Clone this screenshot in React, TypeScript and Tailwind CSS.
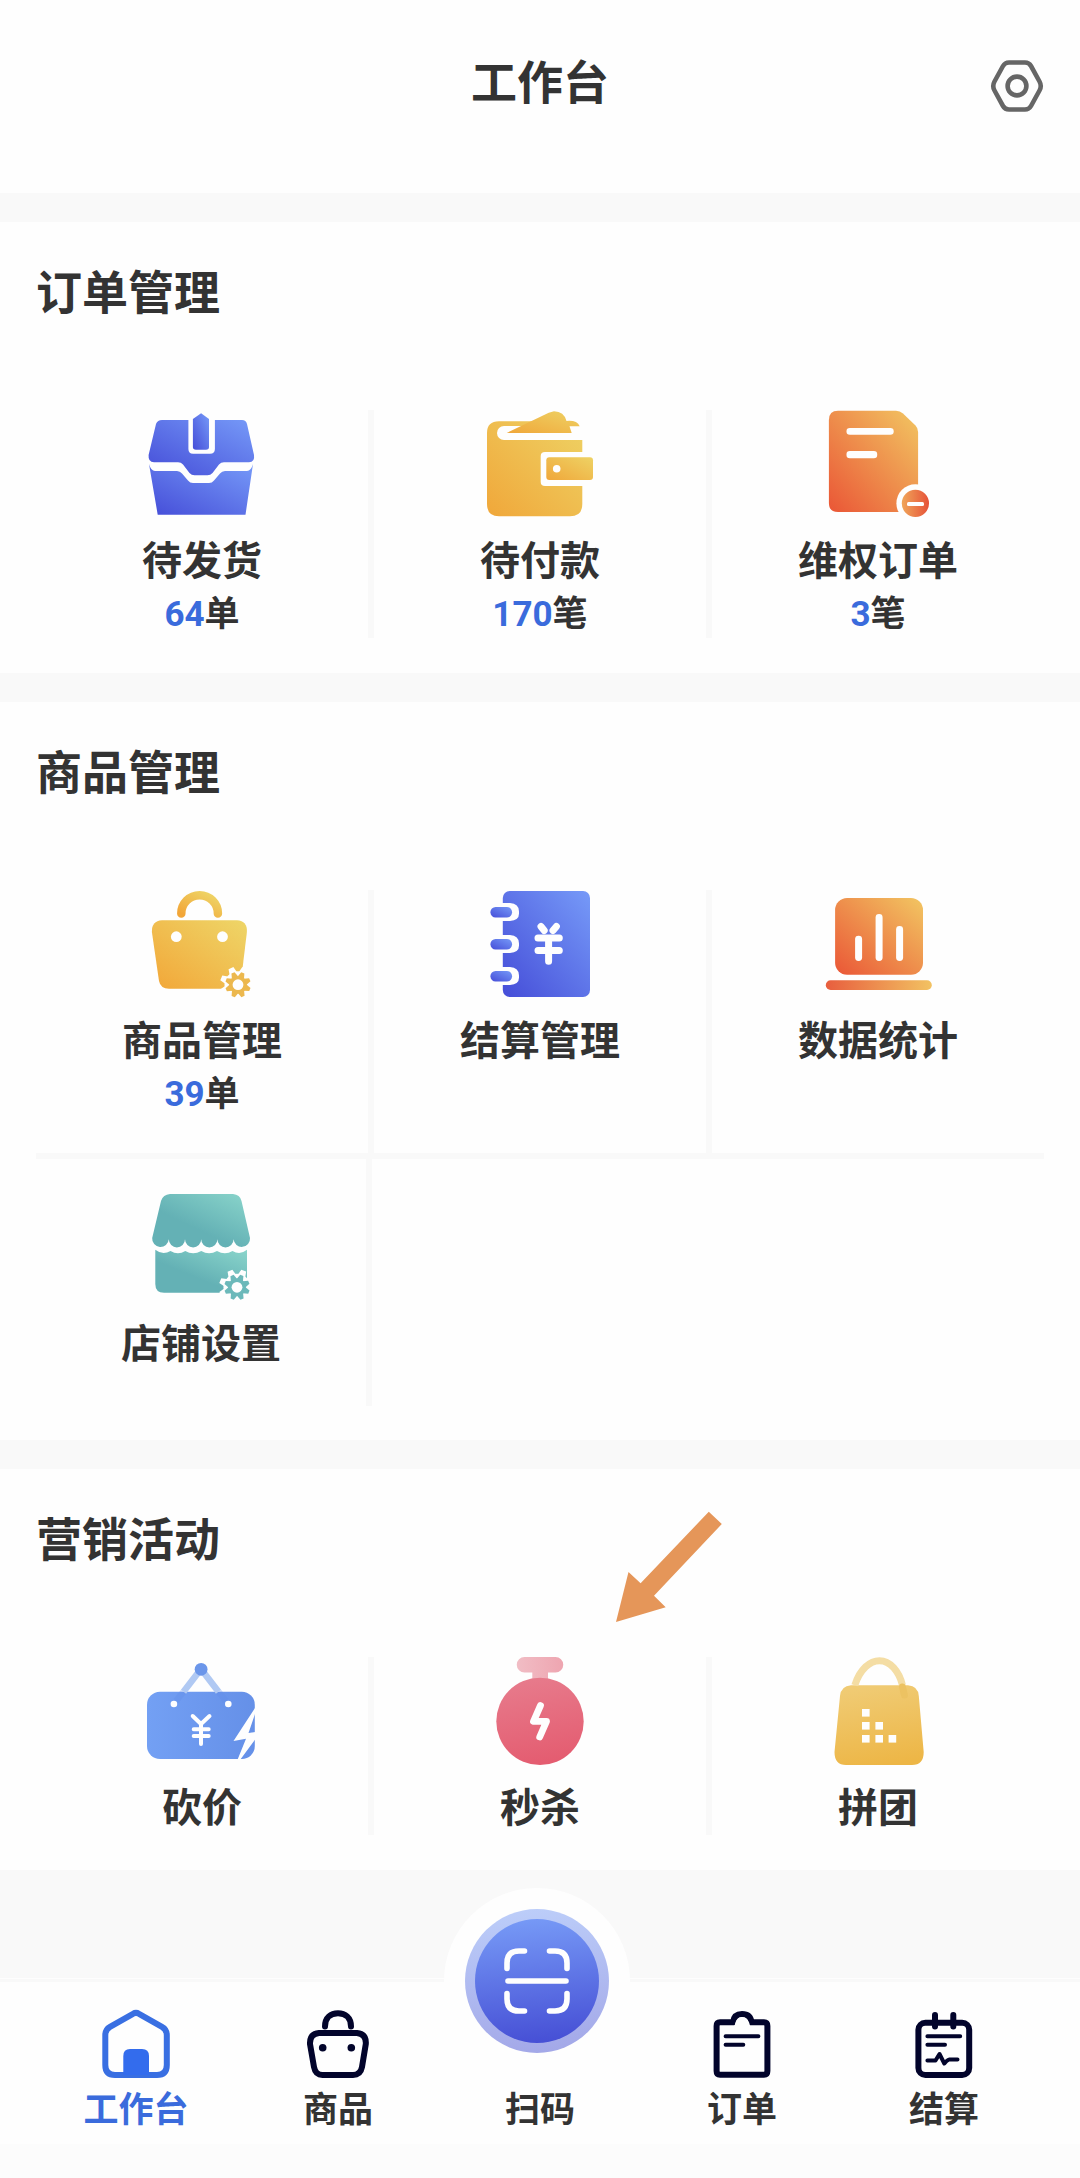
import { Fragment } from "react";
import type { ReactNode } from "react";

type Entry = {
  id: number;
  title: string;
  icon: ReactNode;
  count?: number;
  unit?: string;
};

type Tab = {
  id: number;
  title: string;
  icon?: ReactNode;
  active?: boolean;
};

// Diagonal gradient used by most of the tile icons
function Gradient({ id, from, to }: { id: string; from: string; to: string }) {
  return (
    <linearGradient id={id} x1="0" y1="1" x2="1" y2="0">
      <stop offset="0" stopColor={from} />
      <stop offset="1" stopColor={to} />
    </linearGradient>
  );
}

function TileSvg({ children }: { children: ReactNode }) {
  return (
    <svg
      viewBox="0 0 108 108"
      className="w-[108px] h-[108px] overflow-visible"
      aria-hidden="true"
    >
      {children}
    </svg>
  );
}

function TabSvg({ children }: { children: ReactNode }) {
  return (
    <svg
      viewBox="0 0 72 72"
      className="w-[72px] h-[72px]"
      fill="none"
      strokeLinecap="round"
      strokeLinejoin="round"
      aria-hidden="true"
    >
      {children}
    </svg>
  );
}

// Small cog in the corner of an icon, with a white cog behind it
function Cog({ cx, cy, fill }: { cx: number; cy: number; fill: string }) {
  const teeth = [0, 45, 90, 135, 180, 225, 270, 315];
  return (
    <g transform={`translate(${cx} ${cy})`}>
      <g fill="#fefefe">
        <circle r="13.5" />
        {teeth.map((angle) => (
          <path
            key={angle}
            d="M-4.2 -11 L-2.6 -18 H2.6 L4.2 -11 Z"
            transform={`rotate(${angle + 22})`}
          />
        ))}
      </g>
      <g fill={fill}>
        <circle r="8.8" />
        {teeth.map((angle) => (
          <path
            key={angle}
            d="M-3.4 -7.5 L-1.7 -12.8 H1.7 L3.4 -7.5 Z"
            transform={`rotate(${angle + 22})`}
          />
        ))}
      </g>
      <circle r="5.4" fill="#fefefe" />
    </g>
  );
}

function BoxIcon() {
  return (
    <TileSvg>
      <defs>
        <Gradient id="box" from="#454dd8" to="#769af8" />
      </defs>
      <path
        fill="url(#box)"
        d="M14 10 H94 Q98 10 99 14 L106 45 Q107 52.3 101 52.3 H76 Q73 52.3 71 54.5 L64.5 63 Q62.5 65.3 59.5 65.3 H46.5 Q43.5 65.3 41.5 63 L35 54.5 Q33 52.3 30 52.3 H6 Q0 52.3 0.6 45 L8 14 Q9.5 10 14 10 Z"
      />
      <path
        fill="url(#box)"
        d="M1 54 Q3 61 7 61 H29 Q32 61 34 63.5 L40 70.5 Q42 73 45 73 H61 Q64 73 66 70.5 L72 63.5 Q74 61 77 61 H99 Q103 61 105 54 L97.5 104.7 H9.7 Z"
      />
      <path fill="#fefefe" d="M40.4 0 H66.9 V39 Q66.9 43.7 62 43.7 H45 Q40.4 43.7 40.4 39 Z" />
      <path
        fill="url(#box)"
        d="M53.1 3.3 L61 9 V37 Q61 39.7 58 39.7 H48 Q44.9 39.7 44.9 37 V9 Z"
      />
    </TileSvg>
  );
}

function WalletIcon() {
  return (
    <TileSvg>
      <defs>
        <Gradient id="wallet" from="#f0a73a" to="#eed264" />
      </defs>
      <path
        fill="url(#wallet)"
        d="M13 11.3 H82 V30 H96.3 V94 Q96.3 106.3 84 106.3 H13 Q1 106.3 1 94 V23 Q1 11.3 13 11.3 Z"
      />
      <path fill="#fefefe" d="M18 16 H97 V30 H18 A7 7 0 0 1 18 16 Z" />
      <path fill="#fefefe" d="M80 9 H98 V17 H80 Z" />
      <path
        fill="url(#wallet)"
        d="M20.7 23 L57 5.5 Q63 2 68 1.3 Q78 1.5 80.5 11 Q91 10 93.7 16.3 H83.5 L85.7 23 Z"
      />
      <path fill="#fefefe" d="M59 42 H98 V76 H59 Q54.7 76 54.7 72 V46 Q54.7 42 59 42 Z" />
      <rect x="60.3" y="47.3" width="46.7" height="22.7" rx="3" fill="url(#wallet)" />
      <circle cx="70.7" cy="58.7" r="3.8" fill="#fefefe" />
    </TileSvg>
  );
}

function RefundIcon() {
  return (
    <TileSvg>
      <defs>
        <Gradient id="refund" from="#ea5636" to="#f2c662" />
        <linearGradient id="refundDot">
          <stop offset="0" stopColor="#f0a65a" />
          <stop offset="1" stopColor="#e65238" />
        </linearGradient>
      </defs>
      <path
        fill="url(#refund)"
        d="M14 0.7 H72 Q76 0.7 79 3.5 L91.5 15.5 Q94.1 18 94.1 22 V102 H14 Q4.9 102 4.9 93 V10 Q4.9 0.7 14 0.7 Z"
      />
      <rect x="22.5" y="18" width="47.2" height="6.7" rx="3.3" fill="#fefefe" />
      <rect x="22.5" y="41" width="30.7" height="7.3" rx="3.3" fill="#fefefe" />
      <circle cx="91.4" cy="93.3" r="19" fill="#fefefe" />
      <circle cx="91.4" cy="93.3" r="13.6" fill="url(#refundDot)" />
      <rect x="83" y="92" width="17" height="4" rx="1.5" fill="#fefefe" />
    </TileSvg>
  );
}

function GoodsIcon() {
  return (
    <TileSvg>
      <defs>
        <Gradient id="goods" from="#f2a638" to="#eed668" />
      </defs>
      <path
        d="M33.3 23.5 A18.3 18.3 0 0 1 69.9 23.5"
        fill="none"
        stroke="url(#goods)"
        strokeWidth="8.5"
        strokeLinecap="round"
      />
      <path
        fill="url(#goods)"
        d="M14 30.3 H89 Q99.5 31 98.9 42 L93 91 Q92 98.7 84 98.7 H21 Q12.5 98.7 11 91 L3.9 42 Q3.5 31 14 30.3 Z"
      />
      <circle cx="28.3" cy="46.7" r="5.4" fill="#fefefe" />
      <circle cx="74.5" cy="46.7" r="5.4" fill="#fefefe" />
      <Cog cx={90} cy={94.7} fill="#ecb84e" />
    </TileSvg>
  );
}

function LedgerIcon() {
  const rings = [24.5, 56.5, 88.5];
  return (
    <TileSvg>
      <defs>
        <Gradient id="ledger" from="#454dd8" to="#769af8" />
      </defs>
      <rect x="16.8" y="1" width="87.2" height="106" rx="7" fill="url(#ledger)" />
      {rings.map((y) => (
        <g key={y}>
          <path
            fill="#fefefe"
            d={`M14 ${y - 11.5} H24 Q33 ${y - 11} 33 ${y - 3} V${y - 1} Q33 ${y + 6} 24 ${y + 6.5} H14 Z`}
          />
          <rect x="4.4" y={y - 7.6} width="21.7" height="10.6" rx="5.2" fill="url(#ledger)" />
        </g>
      ))}
      <g stroke="#fefefe" strokeWidth="7" strokeLinecap="round" fill="none">
        <path d="M52 48 H73.3 M52 60.4 H73.3 M62.6 48 V71.2" />
        <path d="M55 36.5 L58.2 40.5 M70.4 36.5 L67 40.5" />
      </g>
    </TileSvg>
  );
}

function StatsIcon() {
  return (
    <TileSvg>
      <defs>
        <Gradient id="stats" from="#ea5636" to="#f2c662" />
        <linearGradient id="statsBase">
          <stop offset="0" stopColor="#e85e3e" />
          <stop offset="1" stopColor="#f2c262" />
        </linearGradient>
      </defs>
      <rect x="11.1" y="8" width="87.9" height="76.7" rx="12" fill="url(#stats)" />
      <rect x="31.1" y="45.7" width="7" height="25.3" rx="3.4" fill="#fefefe" />
      <rect x="51.6" y="24" width="7" height="47" rx="3.4" fill="#fefefe" />
      <rect x="72.1" y="36" width="7" height="35" rx="3.4" fill="#fefefe" />
      <rect x="1.8" y="90.3" width="106" height="9.7" rx="4.8" fill="url(#statsBase)" />
    </TileSvg>
  );
}

function ShopIcon() {
  return (
    <TileSvg>
      <defs>
        <linearGradient id="shop" x1="0.3" y1="0.8" x2="1" y2="0">
          <stop offset="0.2" stopColor="#64b1b5" />
          <stop offset="1" stopColor="#8ad5cb" />
        </linearGradient>
      </defs>
      <path
        fill="url(#shop)"
        d="M23 1 H86 Q93 1.5 94.5 8 L103 45 A8.2 8.2 0 0 1 86.6 46.3 A8.1 8.1 0 0 1 70.4 46.3 A8.1 8.1 0 0 1 54.2 46.3 A8.1 8.1 0 0 1 38 46.3 A8.1 8.1 0 0 1 21.8 46.3 A8.3 8.3 0 0 1 5.2 45 L14 8 Q16 1.5 23 1 Z"
      />
      <path
        fill="url(#shop)"
        d="M8.3 56.8 Q15.5 62.5 23.5 58 Q31 62.5 38.3 58 Q46 62.5 54.3 58 Q62 62.5 70 58 Q78 62.5 85.5 58 Q93 62.5 100 56.8 V99.7 H17 Q8.3 99.7 8.3 91 Z"
      />
      <Cog cx={90} cy={94.3} fill="#6cb9ba" />
    </TileSvg>
  );
}

function BargainIcon() {
  return (
    <TileSvg>
      <defs>
        <linearGradient id="bargain">
          <stop offset="0" stopColor="#73a0f4" />
          <stop offset="1" stopColor="#6590e8" />
        </linearGradient>
      </defs>
      <rect x="-1" y="34.7" width="107.8" height="67.3" rx="13" fill="url(#bargain)" />
      <path
        d="M35.5 34.7 L28 44 M70.5 34.7 L78 44"
        fill="none"
        stroke="#5f8ce8"
        strokeOpacity="0.3"
        strokeWidth="6.5"
      />
      <path
        d="M53 12 L35.5 34.7 M53 12 L70.5 34.7"
        fill="none"
        stroke="#b0c9f3"
        strokeWidth="6.5"
      />
      <circle cx="53.1" cy="12.3" r="6.4" fill="#6b96ea" />
      <circle cx="25.9" cy="47" r="3.3" fill="#fefefe" />
      <circle cx="80.3" cy="47" r="3.3" fill="#fefefe" />
      <path
        d="M44.7 59 L53 67 L61.5 59 M53 67 V87 M45.7 72.3 H60.7 M45.7 79 H60.7"
        fill="none"
        stroke="#fefefe"
        strokeWidth="4"
        strokeLinecap="round"
        strokeLinejoin="round"
      />
      <path
        fill="#fefefe"
        d="M107 51 L85.5 84 L98 81.7 L89.6 102.5 H92.4 L107.5 82 V75 L100.5 76 L107 57 Z"
      />
    </TileSvg>
  );
}

function SeckillIcon() {
  return (
    <TileSvg>
      <defs>
        <linearGradient id="seckill" x1="0.3" y1="0" x2="0.5" y2="1">
          <stop offset="0" stopColor="#e77b8c" />
          <stop offset="1" stopColor="#e45c70" />
        </linearGradient>
        <linearGradient id="seckillCap">
          <stop offset="0" stopColor="#f1bdc5" />
          <stop offset="1" stopColor="#eea5b0" />
        </linearGradient>
      </defs>
      <path
        fill="url(#seckillCap)"
        d="M38.5 0 H69.5 A7.7 7.7 0 0 1 69.5 15.5 H62 V26 H46.3 V15.5 H38.5 A7.7 7.7 0 0 1 38.5 0 Z"
      />
      <circle cx="54" cy="64.4" r="43.7" fill="url(#seckill)" />
      <path
        d="M54.5 48.5 L47.5 64.3 H60.5 L53.7 80"
        fill="none"
        stroke="#fefefe"
        strokeWidth="6.8"
        strokeLinecap="round"
        strokeLinejoin="round"
      />
    </TileSvg>
  );
}

function GroupBuyIcon() {
  const dots = [
    [38, 52],
    [38, 65],
    [51.4, 65],
    [38, 78],
    [51.4, 78],
    [64.6, 78],
  ];
  return (
    <TileSvg>
      <defs>
        <linearGradient id="group" x1="0.4" y1="0" x2="0.6" y2="1">
          <stop offset="0" stopColor="#f0cb74" />
          <stop offset="1" stopColor="#edb646" />
        </linearGradient>
      </defs>
      <path
        fill="url(#group)"
        d="M27 28.3 H84 Q94 29 94.8 39 L99.7 95 Q99.7 108 88 108 H22 Q10.5 108 10.5 95 L16 39 Q17 29 27 28.3 Z"
      />
      <path
        d="M30.8 28.3 C36 12 46 3.7 55.5 3.7 C66 3.7 75 14 78.5 28.3"
        fill="none"
        stroke="#f4dda4"
        strokeWidth="7"
      />
      <path d="M78.5 30 L80.4 38" stroke="#ecc262" strokeWidth="7" strokeLinecap="round" />
      {dots.map(([x, y]) => (
        <rect key={`${x}-${y}`} x={x} y={y} width="7.6" height="7.6" fill="#fefefe" />
      ))}
    </TileSvg>
  );
}

const orders: Entry[] = [
  { id: 1, title: "待发货", icon: <BoxIcon />, count: 64, unit: "单" },
  { id: 2, title: "待付款", icon: <WalletIcon />, count: 170, unit: "笔" },
  { id: 3, title: "维权订单", icon: <RefundIcon />, count: 3, unit: "笔" },
];

const goods: Entry[] = [
  { id: 1, title: "商品管理", icon: <GoodsIcon />, count: 39, unit: "单" },
  { id: 2, title: "结算管理", icon: <LedgerIcon /> },
  { id: 3, title: "数据统计", icon: <StatsIcon /> },
];

const marketing: Entry[] = [
  { id: 1, title: "砍价", icon: <BargainIcon /> },
  { id: 2, title: "秒杀", icon: <SeckillIcon /> },
  { id: 3, title: "拼团", icon: <GroupBuyIcon /> },
];

const tabs: Tab[] = [
  {
    id: 1,
    title: "工作台",
    active: true,
    icon: (
      <TabSvg>
        <path
          d="M33 5.8 Q36 4 39 5.8 L62 18.8 Q66.8 21.5 66.8 27 V57 Q66.8 67 57 67 H15 Q5.3 67 5.3 57 V27 Q5.3 21.5 10 18.8 Z"
          stroke="#396fe2"
          strokeWidth="6"
        />
        <path d="M23.3 67 V48 Q23.3 41 30 41 H42 Q49 41 49 48 V67 Z" fill="#336ced" />
      </TabSvg>
    ),
  },
  {
    id: 2,
    title: "商品",
    icon: (
      <TabSvg>
        <g stroke="#02042b" strokeWidth="6">
          <path d="M23 18.5 C23 9.5 29 5.3 36 5.3 C43 5.3 49 9.5 49 18.5" />
          <path d="M17 25 H55 Q64.5 26 63.8 36 L60 59 Q58.5 67 51 67 H20.5 Q13.5 67 12 59 L8 36 Q7.5 26 17 25 Z" />
        </g>
        <circle cx="20.7" cy="39.7" r="3.8" fill="#02042b" />
        <circle cx="49.3" cy="39.7" r="3.8" fill="#02042b" />
      </TabSvg>
    ),
  },
  { id: 3, title: "扫码" },
  {
    id: 4,
    title: "订单",
    icon: (
      <TabSvg>
        <g stroke="#02042b">
          <path
            d="M27 14.3 H14 Q10.6 14.3 10.6 18 V63 Q10.6 66.7 14 66.7 H58 Q61.4 66.7 61.4 63 V18 Q61.4 14.3 58 14.3 H45.5 Q44.5 6 36 6 Q28 6 27 14.3 Z"
            strokeWidth="6"
          />
          <path d="M19.6 28.2 H52.4 M19.6 36.7 H37.3" strokeWidth="4" />
        </g>
        <path d="M28.5 19 Q29 10 36 9 Q43.5 10 44 19 Z" fill="#fefefe" />
      </TabSvg>
    ),
  },
  {
    id: 5,
    title: "结算",
    icon: (
      <TabSvg>
        <g stroke="#02042b">
          <rect x="10.4" y="14.7" width="50.8" height="52.3" rx="7" strokeWidth="6" />
          <path d="M27 7 V18.5 M45.3 7 V18.5" strokeWidth="6" />
          <path
            d="M19.4 28.2 H52.2 M19.4 36.7 H37 M19.4 52.5 H27.5 L31.5 46 L36.3 55.5 Q39 52 41 51.6 H49.5"
            strokeWidth="4"
          />
        </g>
      </TabSvg>
    ),
  },
];

function Tile({ entry }: { entry: Entry }) {
  return (
    <a href="#" className="flex flex-col items-center">
      {entry.icon}
      <span className="mt-[14px] h-14 text-[40px] leading-[60px] whitespace-nowrap">
        {entry.title}
      </span>
      {entry.count && (
        <span className="h-[50px] text-[35px] leading-[54px]">
          <span className="text-[#3a6bdc]">{entry.count}</span>
          {entry.unit}
        </span>
      )}
    </a>
  );
}

function TileRow({ entries }: { entries: Entry[] }) {
  return (
    <div className="flex">
      {entries.map((entry, index) => (
        <Fragment key={entry.id}>
          {index > 0 && <div className="w-[6px] bg-[#f9f9f9]" />}
          <div className="flex-1">
            <Tile entry={entry} />
          </div>
        </Fragment>
      ))}
    </div>
  );
}

function SectionTitle({ children }: { children: ReactNode }) {
  return (
    <h2 className="pt-9 pb-[82px] text-[46px] leading-[70px] font-bold">
      {children}
    </h2>
  );
}

export default function App() {
  return (
    <div className="bg-[#f9f9f9] text-[#333333] font-bold font-['Roboto','Noto_Sans_CJK_SC',sans-serif]">
      {/* Header */}
      <header className="relative h-[193px] px-9 pt-12 bg-[#fefefe] text-center">
        <h1 className="text-[46px] leading-[70px]">工作台</h1>
        <button
          type="button"
          aria-label="设置"
          className="absolute top-[58px] right-[35px] w-14 h-14"
        >
          <svg viewBox="0 0 56 56" className="w-14 h-14" fill="none" stroke="#666666">
            <path
              d="M20 4.5 H36 Q40 4.5 42 8 L50.5 23.5 Q53 28 50.5 32.5 L42 48 Q40 51.5 36 51.5 H20 Q16 51.5 14 48 L5.5 32.5 Q3 28 5.5 23.5 L14 8 Q16 4.5 20 4.5 Z"
              strokeWidth="4.6"
            />
            <circle cx="28" cy="28" r="9.4" strokeWidth="4.6" />
          </svg>
        </button>
      </header>

      <main className="flex flex-col gap-[29px] pt-[29px]">
        {/* Orders */}
        <section className="px-9 pb-[35px] bg-[#fefefe]">
          <SectionTitle>订单管理</SectionTitle>
          <TileRow entries={orders} />
        </section>

        {/* Goods */}
        <section className="px-9 pb-[34px] bg-[#fefefe]">
          <SectionTitle>商品管理</SectionTitle>
          <div className="grid">
            <div className="grid h-[263px]">
              <TileRow entries={goods} />
            </div>
            <div className="h-[6px] bg-[#f9f9f9]" />
            <div className="w-1/3 h-[247px] pt-[34px] border-r-6 border-[#f9f9f9]">
              <Tile entry={{ id: 4, title: "店铺设置", icon: <ShopIcon /> }} />
            </div>
          </div>
        </section>

        {/* Marketing */}
        <section className="relative px-9 pb-[35px] bg-[#fefefe]">
          <SectionTitle>营销活动</SectionTitle>
          <TileRow entries={marketing} />
          <svg
            viewBox="0 0 106 111"
            className="absolute top-[42px] left-[57%] w-[106px] h-[111px]"
            aria-hidden="true"
          >
            <path
              fill="#e59659"
              d="M0 111 L12.5 61 L24.6 72.3 L92.8 0.7 L105.8 13 L38 84.7 L49.7 96.3 Z"
            />
          </svg>
        </section>
      </main>

      {/* Bottom tabs */}
      <footer className="relative mt-[108px] border-t border-[#fefefe]">
        <nav className="mt-[3px] flex items-end h-[162px] px-[35px] pb-[6px] bg-[#fefefe]">
          {tabs.map((tab) => (
            <a key={tab.id} href="#" className="flex-1 flex flex-col items-center">
              {tab.icon}
              <span
                className={`h-[56px] mt-[2px] text-[35px] leading-[58px] ${
                  tab.active ? "text-[#3a6bdc]" : ""
                }`}
              >
                {tab.title}
              </span>
            </a>
          ))}
        </nav>
        <div className="absolute -top-[91px] inset-x-0 pr-[6px] flex justify-center pointer-events-none">
          <button
            type="button"
            aria-label="扫码"
            className="w-[186px] h-[186px] rounded-full bg-[#fefefe] pointer-events-auto"
          >
            <svg viewBox="0 0 186 186" className="w-[186px] h-[186px]" fill="none">
              <defs>
                <linearGradient id="scan" x1="0.45" y1="0" x2="0.55" y2="1">
                  <stop offset="0" stopColor="#7699f6" />
                  <stop offset="1" stopColor="#464fd5" />
                </linearGradient>
                <linearGradient id="scanRing" x1="0.45" y1="0" x2="0.55" y2="1">
                  <stop offset="0" stopColor="#bccdf9" />
                  <stop offset="1" stopColor="#a3a8e8" />
                </linearGradient>
              </defs>
              <circle cx="93" cy="93" r="72" fill="url(#scanRing)" />
              <circle cx="93" cy="93" r="62" fill="url(#scan)" />
              <path
                d="M80.5 63 H75 Q63 63 63 75 V80.5 M105.5 63 H111 Q123 63 123 75 V80.5 M63 105.5 V111 Q63 123 75 123 H80.5 M105.5 123 H111 Q123 123 123 111 V105.5 M64 93 H122"
                stroke="#fefefe"
                strokeWidth="5.6"
                strokeLinecap="round"
              />
            </svg>
          </button>
        </div>
        <div className="h-[34px] bg-[#fcfcfc]" />
      </footer>
    </div>
  );
}
